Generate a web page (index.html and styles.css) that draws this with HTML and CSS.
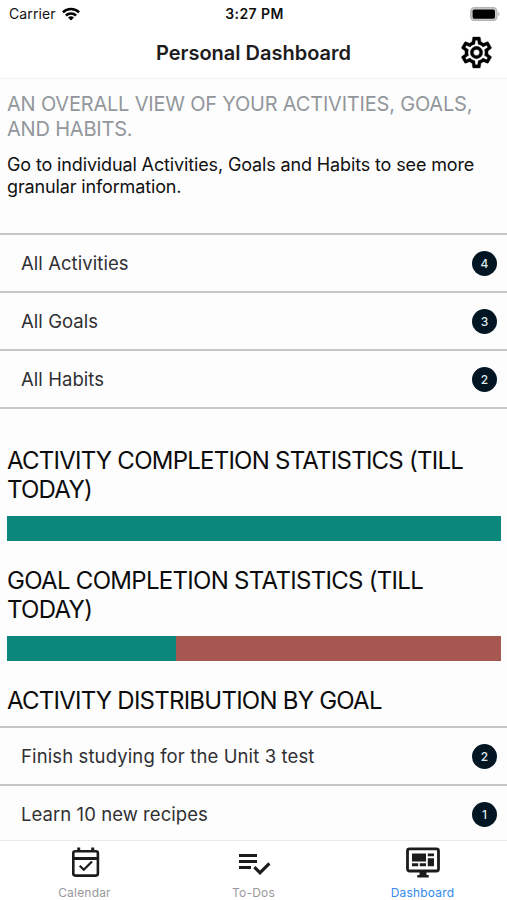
FILE: index.html
```html
<!DOCTYPE html>
<html lang="en">
<head>
<meta charset="utf-8">
<title>Personal Dashboard</title>
<link rel="stylesheet" href="styles.css">
</head>
<body>
<div class="app">
  <div class="status">
    <div class="carrier"><span>Carrier</span>
      <svg class="wifi" viewBox="0 0 18 14"><g fill="none" stroke="#000" stroke-width="2.5"><path d="M.9 5.3a11.5 11.5 0 0 1 16.2 0"/><path d="M3.9 8.5a7.2 7.2 0 0 1 10.2 0"/></g><path d="M9 13.6 6 10.6a4.3 4.3 0 0 1 6 0z"/></svg>
    </div>
    <div class="time">3:27 PM</div>
    <svg class="battery" viewBox="0 0 30 14"><rect x=".8" y=".7" width="26" height="12.8" rx="3.5" fill="#ccc" stroke="#b4b4b4" stroke-width="1.3"/><rect x="2.6" y="2.5" width="22.4" height="9.2" rx="1.7"/><path d="M28.3 4.8c1.5.5 1.5 4 0 4.5z" fill="#aaa"/></svg>
  </div>
  <header class="header">
    <h1>Personal Dashboard</h1>
    <svg class="gear" viewBox="0 0 24 24"><path d="M12,8A4,4 0 0,1 16,12A4,4 0 0,1 12,16A4,4 0 0,1 8,12A4,4 0 0,1 12,8M12,10A2,2 0 0,0 10,12A2,2 0 0,0 12,14A2,2 0 0,0 14,12A2,2 0 0,0 12,10M10,22C9.75,22 9.54,21.82 9.5,21.58L9.13,18.93C8.5,18.68 7.96,18.34 7.44,17.94L4.95,18.95C4.73,19.03 4.46,18.95 4.34,18.73L2.34,15.27C2.21,15.05 2.27,14.78 2.46,14.63L4.57,12.97L4.5,12L4.57,11L2.46,9.37C2.27,9.22 2.21,8.95 2.34,8.73L4.34,5.27C4.46,5.05 4.73,4.96 4.95,5.05L7.44,6.05C7.96,5.66 8.5,5.32 9.13,5.07L9.5,2.42C9.54,2.18 9.75,2 10,2H14C14.25,2 14.46,2.18 14.5,2.42L14.87,5.07C15.5,5.32 16.04,5.66 16.56,6.05L19.05,5.05C19.27,4.96 19.54,5.05 19.66,5.27L21.66,8.73C21.79,8.95 21.73,9.22 21.54,9.37L19.43,11L19.5,12L19.43,13L21.54,14.63C21.73,14.78 21.79,15.05 21.66,15.27L19.66,18.73C19.54,18.95 19.27,19.04 19.05,18.95L16.56,17.95C16.04,18.34 15.5,18.68 14.87,18.93L14.5,21.58C14.46,21.82 14.25,22 14,22H10M11.25,4L10.88,6.61C9.68,6.86 8.62,7.5 7.85,8.39L5.44,7.35L4.69,8.65L6.8,10.2C6.4,11.37 6.4,12.64 6.8,13.8L4.68,15.36L5.43,16.66L7.86,15.62C8.63,16.5 9.68,17.14 10.87,17.38L11.24,20H12.76L13.13,17.39C14.32,17.14 15.37,16.5 16.14,15.62L18.57,16.66L19.32,15.36L17.2,13.81C17.6,12.64 17.6,11.37 17.2,10.2L19.31,8.65L18.56,7.35L16.15,8.39C15.38,7.5 14.32,6.86 13.12,6.62L12.75,4H11.25Z"/></svg>
  </header>
  <main class="content">
    <h2 class="intro">AN OVERALL VIEW OF YOUR ACTIVITIES, GOALS,<br>AND HABITS.</h2>
    <p class="lead">Go to individual Activities, Goals and Habits to see more<br>granular information.</p>
    <ul class="list totals">
      <li><span>All Activities</span><b class="badge">4</b></li>
      <li><span>All Goals</span><b class="badge">3</b></li>
      <li><span>All Habits</span><b class="badge">2</b></li>
    </ul>
    <h3 class="s1">ACTIVITY COMPLETION STATISTICS (TILL<br>TODAY)</h3>
    <div class="bar"><div class="done" style="width:100%"></div></div>
    <h3 class="s2">GOAL COMPLETION STATISTICS (TILL<br>TODAY)</h3>
    <div class="bar"><div class="done" style="width:34.2%"></div></div>
    <h3 class="s3">ACTIVITY DISTRIBUTION BY GOAL</h3>
    <ul class="list goals">
      <li><span>Finish studying for the Unit 3 test</span><b class="badge">2</b></li>
      <li><span>Learn 10 new recipes</span><b class="badge">1</b></li>
    </ul>
  </main>
  <nav class="tabs">
    <div class="tab">
      <svg viewBox="0 0 36 36"><rect x="6.300" y="6.200" width="24.6" height="24.4" rx="2" fill="none" stroke="#1c1c1e" stroke-width="2.6"/><path d="M6 13.400h25.200M11.700 2.600V6M25.700 2.600V6" fill="none" stroke="#1c1c1e" stroke-width="3"/><path d="m12.700 20.700 4.100 4 8.200-8.200" fill="none" stroke="#1c1c1e" stroke-width="2.3"/></svg>
      <span>Calendar</span>
    </div>
    <div class="tab">
      <svg viewBox="0 0 24 24" fill="#1c1c1e"><path d="M14 10H2v2h12v-2zm0-4H2v2h12V6zM2 16h8v-2H2v2zm19.5-4.5L23 13l-6.99 7-4.51-4.5L13 14l3.010 3 5.490-5.500z"/></svg>
      <span>To-Dos</span>
    </div>
    <div class="tab active">
      <svg viewBox="0 0 36 36" fill="#1c1c1e"><rect x="2.5" y="3.8" width="31" height="22.2" rx="2" fill="none" stroke="#1c1c1e" stroke-width="2.8"/><path d="M7 8.5h14v8H7zM22.8 8.5H29v2.8h-6.200zM22.800 13.200H29v8h-6.200zM7 18.200h6.200v3H7zM14.800 18.200H21v3h-6.200zM14.500 27h7v3h2.200v2.500H12.300V30h2.200z"/></svg>
      <span>Dashboard</span>
    </div>
  </nav>
</div>
</body>
</html>
```
FILE: styles.css
```css
* { box-sizing: border-box; }
body { margin: 0; font-family: Inter, "Liberation Sans", sans-serif; background: #fff; color: #111; }
.app { width: 507px; height: 900px; display: flex; flex-direction: column; overflow: hidden; white-space: nowrap; }
.status { height: 27px; flex: none; display: grid; grid-template-columns: 1fr auto 1fr; align-items: center; padding: 0 7px 0 9px; font-size: 14px; }
.carrier { display: flex; align-items: center; gap: 6px; letter-spacing: .1px; }
.wifi { width: 18px; height: 14px; }
.time { font-weight: 600; font-size: 14px; letter-spacing: .4px; }
.battery { width: 30px; height: 14px; justify-self: end; }
.header { height: 52px; flex: none; display: grid; grid-template-columns: 1fr auto 1fr; align-items: center; padding: 0 12px; border-bottom: 1px solid #f4f3f4; }
.header h1 { grid-column: 2; margin: 0; font-size: 20px; font-weight: 600; color: #1c1c1e; }
.gear { width: 37px; height: 37px; justify-self: end; stroke: #000; stroke-width: .25; }
.content { flex: 1; min-height: 0; overflow: hidden; background: #fefdfe; }
.intro { margin: 13px 0 0 7px; font-size: 20px; line-height: 25px; font-weight: 400; color: #92979b; letter-spacing: -.2px; }
.lead { margin: 12px 0 0 7px; font-size: 18px; line-height: 22px; letter-spacing: -.135px; }
.list { list-style: none; margin: 0; padding: 0; color: #303033; }
.list li { height: 58px; display: flex; align-items: center; justify-content: space-between; padding: 0 10px 0 21px; border-top: 2px solid #c6c6c8; font-size: 18.5px; letter-spacing: .06px; }
.totals { margin-top: 35px; border-bottom: 2px solid #c6c6c8; }
.badge { width: 25px; height: 25px; border-radius: 50%; background: #021522; color: #dfe7ec; font-size: 12px; font-weight: 500; display: grid; place-items: center; }
h3 { margin: 0 0 0 7px; font-size: 24px; line-height: 29px; font-weight: 400; color: #0c0c0c; letter-spacing: -.76px; }
.s1 { margin-top: 37px; }
.bar { margin: 12px 6px 0 7px; height: 25px; background: #a65850; }
.done { height: 100%; background: #0b877b; }
.s2, .s3 { margin-top: 25px; }
.s2 { letter-spacing: -.7px; }
.goals { margin-top: 11px; }
.goals li:first-child { letter-spacing: .12px; }
.tabs { height: 60px; flex: none; display: grid; grid-template-columns: repeat(3, 1fr); border-top: 1px solid #e9e9ea; }
.tab { display: flex; flex-direction: column; align-items: center; color: #98989c; font-size: 12px; padding-top: 4px; }
.tab svg { width: 36px; height: 36px; }
.tab span { line-height: 16px; margin-top: 4px; letter-spacing: .2px; }
.tab.active { color: #3389ee; }
```
